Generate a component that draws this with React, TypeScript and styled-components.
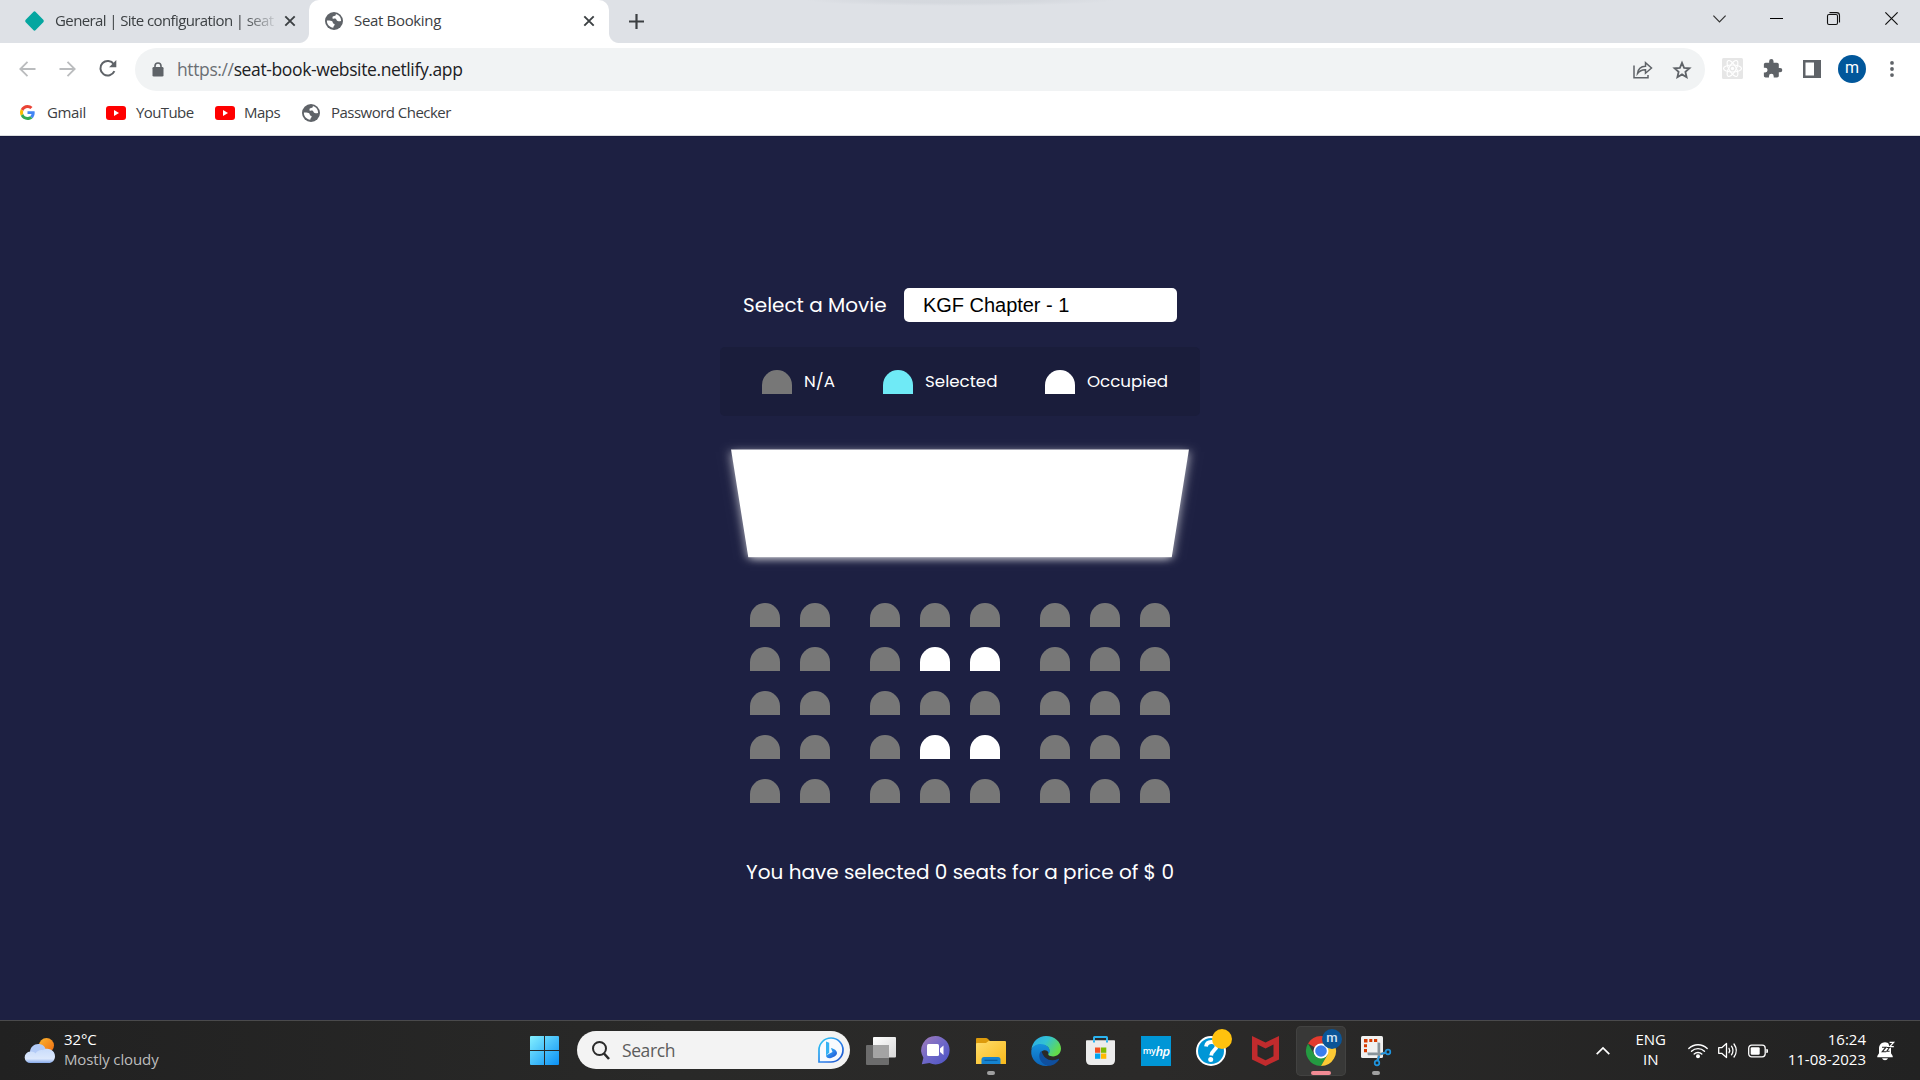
import React from "react";
import styled, { createGlobalStyle } from "styled-components";

const ui = `"Segoe UI", "Open Sans", "Noto Sans", sans-serif`;
const site = `"Poppins", Inter, "Noto Sans", sans-serif`;

const Global = createGlobalStyle`
  * { box-sizing: border-box; }
  body { margin: 0; overflow: hidden; background: #1d2042; }
`;

const Desktop = styled.div`
  display: flex;
  flex-direction: column;
  width: 1920px;
  height: 1080px;
  font-family: ${ui};
  white-space: nowrap;
  svg { display: block; flex: none; overflow: visible; }
`;

/* ---------- browser chrome ---------- */
const TabStrip = styled.div`
  display: flex;
  align-items: flex-start;
  height: 43px;
  flex: none;
  background:
    radial-gradient(ellipse 155px 6px at 960px 0, rgba(120, 128, 140, 0.09) 50%, transparent) no-repeat,
    #dee1e6;
`;

const Tab = styled.div<{ $active?: boolean }>`
  position: relative;
  display: flex;
  align-items: center;
  height: 43px;
  width: ${(p) => (p.$active ? 300 : 309)}px;
  padding: 0 ${(p) => (p.$active ? 15 : 14)}px 1px ${(p) => (p.$active ? 16 : 25)}px;
  border-radius: 10px 10px 0 0;
  background: ${(p) => (p.$active ? "#fff" : "transparent")};
  ${(p) =>
    p.$active &&
    `&::before, &::after {
      content: "";
      position: absolute;
      bottom: 0;
      width: 10px;
      height: 10px;
    }
    &::before { left: -10px; background: radial-gradient(circle at 0 0, transparent 9.5px, #fff 10.5px); }
    &::after { right: -10px; background: radial-gradient(circle at 100% 0, transparent 9.5px, #fff 10.5px); }`}
`;

const TabTitle = styled.div<{ $spacing: number; $fade?: boolean }>`
  flex: 1;
  min-width: 0;
  margin-left: 11px;
  padding-bottom: 2px;
  overflow: hidden;
  font-size: 15px;
  line-height: 22px;
  color: #3c4043;
  letter-spacing: ${(p) => p.$spacing}px;
  ${(p) => p.$fade && "mask-image: linear-gradient(90deg, #000 188px, transparent 224px);"}
`;

const NewTab = styled.div`
  display: flex;
  align-items: center;
  height: 42px;
  margin-left: 20px;
`;

const WindowControls = styled.div`
  display: flex;
  align-items: center;
  height: 37px;
  margin-left: auto;
`;

const ControlSlot = styled.div<{ $w: number }>`
  display: flex;
  justify-content: center;
  width: ${(p) => p.$w}px;
`;

const Toolbar = styled.div`
  display: flex;
  align-items: center;
  height: 53px;
  flex: none;
  padding: 0 0 2px 19px;
  background: #fff;
`;

const NavButtons = styled.div`
  display: flex;
  align-items: center;
  gap: 23px;
  width: 116px;
`;

const Omnibox = styled.div`
  display: flex;
  align-items: center;
  width: 1570px;
  height: 43px;
  margin-top: 2px;
  padding: 0 14px 0 17px;
  border-radius: 22px;
  background: #f1f3f4;
`;

const Url = styled.div`
  flex: 1;
  margin: 0 0 1px 13px;
  font-size: 17.5px;
  letter-spacing: -0.38px;
  color: #202124;
  span { color: #6b6f74; }
`;

const OmniActions = styled.div`
  display: flex;
  align-items: center;
  gap: 20px;
`;

const ToolbarActions = styled.div`
  display: flex;
  align-items: center;
  margin-left: 17px;
`;

const Avatar = styled.div`
  display: flex;
  align-items: center;
  justify-content: center;
  width: 28px;
  height: 28px;
  margin: 0 24px 0 17px;
  padding-bottom: 1px;
  border-radius: 50%;
  background: #01579b;
  color: #fff;
  font: 16px/1 Roboto, sans-serif;
`;

const Bookmarks = styled.div`
  display: flex;
  align-items: center;
  height: 40px;
  flex: none;
  padding: 0 0 6px 20px;
  background: #fff;
  border-bottom: 1px solid #dcdee0;
`;

const Bookmark = styled.div<{ $w: number; $gap: number; $spacing: number }>`
  display: flex;
  align-items: center;
  gap: ${(p) => p.$gap}px;
  width: ${(p) => p.$w}px;
  font-size: 15px;
  line-height: 22px;
  letter-spacing: ${(p) => p.$spacing}px;
  color: #3c4043;
  span { padding-bottom: 2px; }
`;

/* ---------- booking page ---------- */
const Page = styled.main`
  display: flex;
  flex-direction: column;
  align-items: center;
  flex: 1;
  padding-top: 151px;
  background: #1d2042;
  border-top: 1px solid #171a3c;
  color: #fff;
  font-family: ${site};
`;

const MovieRow = styled.div`
  display: flex;
  align-items: center;
  justify-content: space-between;
  width: 434px;
  height: 34px;
  font-size: 20px;
`;

const MovieSelect = styled.div`
  display: flex;
  align-items: center;
  width: 273px;
  height: 34px;
  padding: 0 19px;
  border-radius: 5px;
  background: #fff;
  color: #000;
  font-family: "Liberation Sans", Arial, sans-serif;
  font-size: 20px;
  letter-spacing: -0.03px;
`;

const Legend = styled.ul`
  display: flex;
  width: 480px;
  height: 69px;
  margin: 25px 0 33px;
  padding: 23px 0 0 42px;
  border-radius: 5px;
  background: #1a1d3b;
  list-style: none;
`;

const LegendItem = styled.li<{ $w: number }>`
  display: flex;
  align-items: flex-start;
  gap: 12px;
  width: ${(p) => p.$w}px;
  font-size: 16.7px;
  line-height: 23px;
`;

const seatColor = { na: "#777777", selected: "#6feaf6", occupied: "#ffffff" };

const Seat = styled.div<{ $kind: keyof typeof seatColor }>`
  width: 30px;
  height: 24px;
  border-radius: 15px 15px 0 0;
  background: ${(p) => seatColor[p.$kind]};
`;

const Screen = styled.div`
  flex: none;
  width: 440px;
  height: 133px;
  margin: -10px 0 31px;
  background: #fff;
  transform: perspective(1000px) rotateX(-36deg);
  box-shadow: 0 3px 10px rgba(255, 255, 255, 0.75);
`;

const SeatGrid = styled.div`
  display: grid;
  grid-template-columns: 50px 70px 50px 50px 70px 50px 50px 30px;
  row-gap: 20px;
  margin-bottom: 55px;
`;

const Summary = styled.p`
  margin: 0;
  font-size: 20px;
  line-height: 28px;
`;

/* ---------- taskbar ---------- */
const Taskbar = styled.footer`
  display: flex;
  align-items: center;
  height: 60px;
  flex: none;
  border-top: 1px solid #4a4a4c;
  background: linear-gradient(90deg, #212121, #292928 35%, #2b2a29 60%, #222 100%);
  color: #fff;
`;

const Weather = styled.div`
  display: flex;
  align-items: center;
  gap: 9px;
  width: 519px;
  padding-left: 25px;
`;

const TwoLines = styled.div<{ $align?: string; $w?: number; $spacing?: number }>`
  width: ${(p) => (p.$w ? p.$w + "px" : "auto")};
  padding-bottom: 3px;
  font-size: 15px;
  line-height: 20px;
  letter-spacing: ${(p) => p.$spacing ?? 0}px;
  text-align: ${(p) => p.$align ?? "left"};
`;

const Muted = styled.div`
  color: #bdbdbd;
`;

const Slot = styled.div<{ $active?: boolean }>`
  position: relative;
  display: flex;
  align-items: center;
  justify-content: center;
  width: 50px;
  height: 50px;
  margin-right: 5px;
  flex: none;
  border-radius: 5px;
  ${(p) => p.$active && "background: #383837; box-shadow: inset 0 0 0 1px #424241;"}
`;

const Running = styled.span<{ $active?: boolean }>`
  position: absolute;
  bottom: 1px;
  left: 50%;
  width: ${(p) => (p.$active ? 20 : 8)}px;
  height: 4px;
  border-radius: 2px;
  transform: translateX(-50%);
  background: ${(p) => (p.$active ? "#f28b94" : "#a0a0a0")};
`;

const Badge = styled.span<{ $color: string }>`
  position: absolute;
  top: 3px;
  right: 4px;
  width: 20px;
  height: 20px;
  border-radius: 50%;
  background: ${(p) => p.$color};
  color: #d3e4f4;
  font: 500 13px/18px Roboto, sans-serif;
  text-align: center;
`;

const SearchBox = styled.div`
  display: flex;
  align-items: center;
  width: 273px;
  height: 38px;
  margin: 0 6px 1px 3px;
  padding: 0 6px 0 15px;
  flex: none;
  border-radius: 19px;
  background: #f3f3f3;
  color: #5c5c5c;
  font-size: 17.5px;
  letter-spacing: -0.4px;
  span { flex: 1; margin-left: 12px; }
`;

const HpTile = styled.div`
  display: flex;
  align-items: center;
  justify-content: center;
  width: 30px;
  height: 30px;
  background: #0096d6;
  font: 600 9px/30px "Open Sans", sans-serif;
  letter-spacing: -0.3px;
  i { font-size: 13px; letter-spacing: -0.8px; }
`;

const Tray = styled.div`
  display: flex;
  align-items: center;
  height: 100%;
  margin-left: auto;
  padding-right: 25px;
`;

const TrayIcons = styled.div`
  display: flex;
  align-items: center;
  gap: 10px;
  margin: 0 20px 0 12px;
`;

const Language = styled(TwoLines)`
  margin-left: 16px;
`;

const Clock = styled(TwoLines)`
  margin-right: 11px;
`;

const Globe = () => (
  <svg width="18" height="18" viewBox="0 0 18 18">
    <circle cx="9" cy="9" r="9" fill="#5f6368" />
    <path d="M1.9 8.6C3.6 8.4 6.4 8.6 7.4 9.6c.9 1-.2 1.9 1.4 2.1 1.2.2 1 1.1.5 1.7-.5.7-1 1.2-1 2.4-3.5-.3-6.6-3.300-6.400-7.200z" fill="#fff" />
    <path d="M10.900 2c0 1.300-.4 1.900-1.700 2-1.400.1-1.800.7-1.700 1.900.1 1.300 1.400.8 2.600.7 1.200 0 1.100 1.300 2 2.200.9.8 2.500.3 4 .2.100-3.500-2-6.200-5.200-7z" fill="#fff" />
  </svg>
);

const Cross = ({ size = 10, w = 1.9, color = "#3c4043" }) => (
  <svg width={size} height={size} viewBox="0 0 10 10" stroke={color} strokeWidth={(w * 10) / size}>
    <path d="M.3.3l9.400 9.400M9.700.3L.3 9.700" />
  </svg>
);

const Arrow = ({ flip = false }) => (
  <svg width="17" height="16" viewBox="0 0 17 16" fill="none" stroke="#babcbe" strokeWidth="1.8" transform={flip ? "scale(-1 1)" : undefined}>
    <path d="M16.500 8H1.500M8.500.8L1.300 8l7.200 7.200" />
  </svg>
);

const YouTube = () => (
  <svg width="20" height="14" viewBox="0 0 20 14">
    <rect width="20" height="14" rx="3" fill="#f00" />
    <path d="M8 4l5 3-5 3z" fill="#fff" />
  </svg>
);

const GoogleG = () => (
  <svg width="15" height="15" viewBox="0 0 48 48">
    <path fill="#EA4335" d="M24 9.500c3.540 0 6.710 1.220 9.210 3.600l6.850-6.850C35.900 2.380 30.470 0 24 0 14.620 0 6.510 5.380 2.560 13.220l7.980 6.190C12.430 13.720 17.740 9.500 24 9.500z" />
    <path fill="#4285F4" d="M46.980 24.550c0-1.570-.15-3.090-.38-4.550H24v9.020h12.940c-.58 2.960-2.260 5.480-4.780 7.180l7.730 6c4.510-4.180 7.090-10.360 7.090-17.650z" />
    <path fill="#FBBC05" d="M10.530 28.590c-.48-1.450-.76-2.990-.76-4.590s.27-3.140.76-4.590l-7.980-6.190C.92 16.460 0 20.120 0 24c0 3.880.92 7.540 2.560 10.780l7.970-6.190z" />
    <path fill="#34A853" d="M24 48c6.480 0 11.930-2.130 15.890-5.810l-7.730-6c-2.150 1.450-4.920 2.300-8.160 2.300-6.260 0-11.570-4.220-13.470-9.910l-7.980 6.190C6.510 42.620 14.620 48 24 48z" />
  </svg>
);

const ReactExt = () => (
  <svg width="21" height="21" viewBox="0 0 21 21">
    <rect width="21" height="21" rx="1.500" fill="#e6e6e6" />
    <g fill="none" stroke="#fff" strokeWidth="1.200">
      <ellipse cx="10.500" cy="10.500" rx="9" ry="3.500" />
      <ellipse cx="10.500" cy="10.500" rx="9" ry="3.500" transform="rotate(60 10.500 10.500)" />
      <ellipse cx="10.500" cy="10.500" rx="9" ry="3.500" transform="rotate(120 10.500 10.500)" />
    </g>
    <circle cx="10.500" cy="10.500" r="1.700" fill="#fff" />
  </svg>
);

const BingIcon = () => (
  <svg width="26" height="26" viewBox="0 0 26 26">
    <defs>
      <linearGradient id="bing" x1="0" y1="0" x2="1" y2="1">
        <stop offset="0" stopColor="#2ccdf5" />
        <stop offset=".6" stopColor="#2a7be8" />
        <stop offset="1" stopColor="#1b4fc4" />
      </linearGradient>
    </defs>
    <path d="M1 25V13A12 12 0 1 1 13 25z" fill="#f7fafe" stroke="url(#bing)" strokeWidth="1.700" />
    <path d="M8 4.500l3.200 1.200v10l-3.200 2.800z" fill="#35b2f3" />
    <path d="M8 18.500l3.200-1.800 3.300-1.800-1.600-4c3 .7 6.100 2.200 6.100 5.200 0 2.800-4.300 4.800-6.900 5.100-2.500.2-4.100-1.100-4.100-2.700z" fill="url(#bing)" />
  </svg>
);

const StartIcon = () => (
  <svg width="29" height="29" viewBox="0 0 29 29">
    <defs>
      <linearGradient id="win" x1="0" y1="0" x2="29" y2="29" gradientUnits="userSpaceOnUse">
        <stop stopColor="#84f0ff" />
        <stop offset="1" stopColor="#0a90f5" />
      </linearGradient>
    </defs>
    <path fill="url(#win)" d="M0 1q0-1 1-1h13v14H0zM15 0h13q1 0 1 1v13H15zM0 15h14v14H1q-1 0-1-1zM15 15h14v13q0 1-1 1H15z" />
  </svg>
);

const TaskViewIcon = () => (
  <svg width="30" height="28" viewBox="0 0 30 28">
    <defs>
      <linearGradient id="tv" x1="0" y1="0" x2="1" y2="1">
        <stop stopColor="#fff" />
        <stop offset="1" stopColor="#d8d8d8" />
      </linearGradient>
    </defs>
    <rect x="0" y="8" width="23" height="20" rx="1" fill="#6c6c6c" />
    <rect x="7" y="0" width="23" height="20.500" rx="1" fill="url(#tv)" />
    <rect x="7" y="8" width="16" height="12.500" fill="#a4a4a4" />
  </svg>
);

const ChatIcon = () => (
  <svg width="30" height="29" viewBox="0 0 30 29">
    <defs>
      <linearGradient id="chat" x1="0" y1="0" x2="1" y2="1">
        <stop stopColor="#a37bb8" />
        <stop offset=".5" stopColor="#6f68c8" />
        <stop offset="1" stopColor="#4b52c4" />
      </linearGradient>
    </defs>
    <path d="M14.500 0a14.200 14.200 0 1 1-6 27.100L.8 28.200l1.600-6.500A14.200 14.200 0 0 1 14.500 0z" fill="url(#chat)" />
    <rect x="6" y="8" width="12" height="12" rx="1.500" fill="#fff" />
    <path d="M19 12.500l3.500-3v9.500l-3.500-3z" fill="#fff" />
  </svg>
);

const FolderIcon = () => (
  <svg width="30" height="28" viewBox="0 0 30 28">
    <defs>
      <linearGradient id="fold" x1="0" y1="0" x2="1" y2="1">
        <stop stopColor="#ffdd6b" />
        <stop offset="1" stopColor="#f9b91a" />
      </linearGradient>
    </defs>
    <path d="M0 2q0-1 1-1h9q1 0 2 1l2 2v6H0z" fill="#dd9b0c" />
    <path d="M0 7q0-1 1-1h9l2.500-2H29q1 0 1 1v22H0z" fill="url(#fold)" />
    <path d="M5.500 27v-4.500q0-2.500 2.500-2.500h14q2.500 0 2.500 2.500V27z" fill="#1583d0" />
    <rect x="8.500" y="22.700" width="13" height="1.300" fill="#0b5c9c" />
  </svg>
);

const EdgeIcon = () => (
  <svg width="30" height="30" viewBox="0 0 30 30">
    <defs>
      <linearGradient id="e1" x1="0" y1="0" x2="1" y2=".5">
        <stop stopColor="#2aa8e8" />
        <stop offset=".5" stopColor="#33c2d4" />
        <stop offset="1" stopColor="#63db4a" />
      </linearGradient>
      <linearGradient id="e2" x1="0" y1="0" x2="0" y2="1">
        <stop stopColor="#1793dd" />
        <stop offset="1" stopColor="#0b63b8" />
      </linearGradient>
    </defs>
    <path d="M.4 13.500C1.200 5.800 7.400 0 15 0c9 0 15 6.300 15 12.600 0 5-3.800 7.900-7.900 7.900-4 0-5.300-1.700-4.600-2.900 1.800-3 1-7.600-4.500-8.300C7 8.500 2 10 .4 13.500z" fill="url(#e1)" />
    <path d="M.3 14.500C1.200 10.500 5 8 9.500 8c5 0 9.300 3 9.300 7.300 0 1-.4 2-1 2.700-.2-2.500-2.400-4.200-4.800-3.700-3.500.8-4.500 4.300-3.500 7.500 1.200 4 4.500 7 8.500 8C8 31.500-.8 24 .3 14.500z" fill="url(#e2)" />
    <path d="M10.500 14.800c-4.300 3.200-2.500 13 6.500 15 5 .3 8.700-2.700 10.900-6 .5-.9-.1-1.300-.8-.9-7.400 3.600-14.800.2-16.600-8.100z" fill="#0f4f9e" />
  </svg>
);

const StoreIcon = () => (
  <svg width="30" height="29" viewBox="0 0 30 29">
    <path d="M8 7V1.500Q8 1 8.500 1h12q.500 0 .5.500V7" fill="none" stroke="#2bb4f0" strokeWidth="2" />
    <path d="M0 5q0-.8.800-.8h27.400q.800 0 .8.800v19q0 5-5 5H5q-5 0-5-5z" fill="#ececec" />
    <path d="M8 4.200v2.300M21 4.200v2.300" stroke="#2bb4f0" strokeWidth="2" />
    <path d="M9 11.500h5.300v5.300H9z" fill="#f25022" />
    <path d="M15 11.500h5.300v5.300H15z" fill="#7fba00" />
    <path d="M9 17.500h5.300v5.300H9z" fill="#00a4ef" />
    <path d="M15 17.500h5.300v5.300H15z" fill="#ffb900" />
  </svg>
);

const HelpIcon = () => (
  <svg width="30" height="30" viewBox="0 0 30 30">
    <circle cx="15" cy="15" r="14" fill="#0096d6" stroke="#fff" strokeWidth="2" />
    <path d="M10 10.500c.5-3.500 3-4.700 6-4.500 3.200.3 4.800 2.200 4.600 4.500-.3 3.600-5 4-5.400 9" fill="none" stroke="#fff" strokeWidth="3.800" />
    <circle cx="14.700" cy="23.500" r="2.500" fill="#fff" />
  </svg>
);

const McAfeeIcon = () => (
  <svg width="28" height="30" viewBox="0 0 28 30">
    <path d="M0 0l13.500 6.500L27 0v23.500L13.500 30 0 23.500zM5.500 8.500v11.700l8 4 8-4V8.500l-8 4z" fill="#c12b2d" fillRule="evenodd" />
  </svg>
);

const ChromeIcon = () => (
  <svg width="30" height="30" viewBox="0 0 30 30">
    <path d="M15 15L2 7.500A15 15 0 0 1 28 7.500H15z" fill="#e33b2e" />
    <path d="M2 7.500A15 15 0 0 0 15 30l6.500-11.250L8.500 18.750z" fill="#249a41" />
    <path d="M28 7.500A15 15 0 0 1 15 30l6.500-11.250L15 7.500z" fill="#fcc934" />
    <circle cx="15" cy="15" r="7.500" fill="#fff" />
    <circle cx="15" cy="15" r="5.800" fill="#3b7ded" />
  </svg>
);

const SnipIcon = () => (
  <svg width="30" height="30" viewBox="0 0 30 30">
    <rect width="22" height="22" rx="1.500" fill="#f1f1f1" />
    <path d="M3 3h3.500v3.500H3zM8.300 3h3v3h-3zM13 3h3.200v3H13zM3 8.300h3v3H3zM3 13h3v3.200H3z" fill="#d83b01" />
    <path d="M17.500 6v11.500M6 17.500h11" stroke="#c3c7ca" strokeWidth="2.500" />
    <path d="M18 7v12l-1.500 5.500M7 18h13l4.500-1.300" fill="none" stroke="#8a959c" strokeWidth="2.400" />
    <circle cx="27" cy="16" r="2.300" fill="none" stroke="#1f95e0" strokeWidth="1.700" />
    <circle cx="16" cy="27" r="2.300" fill="none" stroke="#1f95e0" strokeWidth="1.700" />
    <path d="M24.800 16.500L20 18M16.800 25l1.400-5" stroke="#1f95e0" strokeWidth="1.700" />
  </svg>
);

const CloudIcon = () => (
  <svg width="30" height="26" viewBox="0 0 30 26">
    <defs>
      <linearGradient id="sun" x1="0" y1="0" x2="1" y2="1">
        <stop stopColor="#fdb62f" />
        <stop offset="1" stopColor="#ee6a10" />
      </linearGradient>
      <linearGradient id="cl" x1="0" y1="0" x2="0" y2="1">
        <stop stopColor="#c9dcfb" />
        <stop offset=".7" stopColor="#dce8fc" />
        <stop offset="1" stopColor="#86a9ea" />
      </linearGradient>
    </defs>
    <circle cx="21.500" cy="7.500" r="7.500" fill="url(#sun)" />
    <path d="M5 14c.2-5 4-8 8.300-8 4 0 6.500 2.200 7.500 5.500l2 6H5z" fill="#b3cbf7" />
    <path d="M5.500 25a5.700 5.700 0 0 1-.3-11.400c2-.3 4 .5 5.300 1.800C12 13 15 11.500 18 12.200c2-1.700 5-2 7.500-.7C28.500 12.800 30 15.500 30 18.200c0 4-3 6.800-6.300 6.800z" fill="url(#cl)" />
  </svg>
);

const WifiIcon = () => (
  <svg width="20" height="16" viewBox="0 0 20 16" fill="none" stroke="#fff" strokeWidth="1.400" strokeLinecap="round">
    <path d="M.8 5.500a13 13 0 0 1 18.400 0M3.500 8.300a9.200 9.200 0 0 1 13 0M6.200 11a5.400 5.400 0 0 1 7.600 0" />
    <circle cx="10" cy="13.200" r="1.300" fill="#fff" />
  </svg>
);

const SoundIcon = () => (
  <svg width="20" height="17" viewBox="0 0 20 17" fill="none" stroke="#fff" strokeWidth="1.300" strokeLinecap="round" strokeLinejoin="round">
    <path d="M.7 5.700h3L8.500 1.500v14L3.700 11.300h-3z" />
    <path d="M11 6.300q1.400 2.200 0 4.400M13.500 4.200q3 4.300 0 8.600M16 2q4.600 6.500 0 13" />
  </svg>
);

const BatteryIcon = () => (
  <svg width="20" height="14" viewBox="0 0 20 14">
    <rect x=".7" y="1.200" width="16.500" height="11.600" rx="3" fill="none" stroke="#fff" strokeWidth="1.300" />
    <rect x="2.700" y="3.200" width="9" height="7.600" rx="1.200" fill="#fff" />
    <path d="M18.300 5h.5q1.200 0 1.200 1v2q0 1-1.200 1h-.5z" fill="#fff" />
  </svg>
);

const BellIcon = () => (
  <svg width="18" height="20" viewBox="0 0 18 20">
    <path d="M8 1.200C4.500 1.200 2 4 2 7.500v4.800L.3 15v1.300h15.400V15L14 12.300V7.500C14 4 11.500 1.200 8 1.200z" fill="#fff" />
    <path d="M5 17.300h6q-.8 2-3 2t-3-2z" fill="#fff" />
    <path d="M10.800 0h7.200v7h-4l-1.500-1z" fill="#262626" />
    <path d="M12.600 1.300h4L12.800 5.700h4" stroke="#fff" fill="none" strokeWidth="1.300" />
    <path d="M5 6.200h4L5.200 10.800h4M9.800 6.500h2.600l-2.600 3.800h2.800" stroke="#262626" fill="none" strokeWidth="1.100" />
  </svg>
);

const occupied = new Set([11, 12, 27, 28]);
const seats = Array.from({ length: 40 }, (_, i) => (occupied.has(i) ? "occupied" : "na") as "occupied" | "na");

const PuzzleSlot = styled.div`
  margin-left: 20px;
`;

const PanelSlot = styled.div`
  margin-left: 22px;
`;

export default function App() {
  return (
    <Desktop>
      <Global />
      <TabStrip>
        <Tab>
          <svg width="19" height="20" viewBox="0 0 19 20">
            <path d="M8.300.9q1.200-1.200 2.400 0l7.600 7.900q1.200 1.200 0 2.400l-7.600 7.900q-1.200 1.200-2.400 0L.7 11.200q-1.200-1.200 0-2.400z" fill="#05a6a0" />
          </svg>
          <TabTitle $spacing={-0.6} $fade>General | Site configuration | seat</TabTitle>
          <Cross />
        </Tab>
        <Tab $active>
          <Globe />
          <TabTitle $spacing={-0.33}>Seat Booking</TabTitle>
          <Cross />
        </Tab>
        <NewTab>
          <svg width="15" height="15" viewBox="0 0 15 15" stroke="#3c4043" strokeWidth="2.200">
            <path d="M7.500 0v15M0 7.500h15" />
          </svg>
        </NewTab>
        <WindowControls>
          <ControlSlot $w={57}>
            <svg width="13" height="8" viewBox="0 0 13 8" fill="none" stroke="#333" strokeWidth="1.200"><path d="M.4.700l6.100 6.100L12.600.7" /></svg>
          </ControlSlot>
          <ControlSlot $w={57}>
            <svg width="13" height="1" viewBox="0 0 13 1"><rect width="13" height="1" fill="#000" /></svg>
          </ControlSlot>
          <ControlSlot $w={57}>
            <svg width="13" height="13" viewBox="0 0 13 13" fill="none" stroke="#111" strokeWidth="1.100">
              <rect x=".5" y="2.500" width="10" height="10" rx="1.500" />
              <path d="M2.500.6H9.500Q12.500.6 12.500 3.500V10.500" />
            </svg>
          </ControlSlot>
          <ControlSlot $w={58}><Cross size={13} w={1.2} color="#111" /></ControlSlot>
        </WindowControls>
      </TabStrip>

      <Toolbar>
        <NavButtons>
          <Arrow />
          <Arrow flip />
          <svg width="18" height="17" viewBox="0 0 18 17">
            <path d="M14.800 4.200A7.300 7.300 0 1 0 15.400 11.200" fill="none" stroke="#5f6368" strokeWidth="2" />
            <path d="M17.300 0v7.200h-7.200z" fill="#5f6368" />
          </svg>
        </NavButtons>
        <Omnibox>
          <svg width="12" height="15" viewBox="0 0 12 15">
            <rect x=".5" y="5" width="11" height="9.500" rx="1.300" fill="#5f6368" />
            <path d="M3 6V4a3 3 0 0 1 6 0v2" fill="none" stroke="#5f6368" strokeWidth="1.600" />
          </svg>
          <Url><span>https://</span>seat-book-website.netlify.app</Url>
          <OmniActions>
            <svg width="20" height="18" viewBox="0 0 20 18" fill="none" stroke="#5f6368" strokeWidth="1.500">
              <path d="M1 4.500V16.800H15V14" />
              <path d="M4.500 12.500C5 8 8 5.500 12.500 5.300V1.600L18.500 7l-6 5.200V8.700C9 8.600 6.500 9.800 4.500 12.500z" />
            </svg>
            <svg width="18" height="18" viewBox="0 0 18 18" fill="none" stroke="#5f6368" strokeWidth="1.800">
              <path d="M9 1.800l2.100 5 5.400.5-4.100 3.600 1.200 5.300L9 13.400l-4.600 2.800 1.200-5.300L1.500 7.300l5.400-.5z" />
            </svg>
          </OmniActions>
        </Omnibox>
        <ToolbarActions>
          <ReactExt />
          <PuzzleSlot>
            <svg width="18" height="18" viewBox="1 2 20.500 20.500">
              <path d="M20.500 11H19V7c0-1.100-.9-2-2-2h-4V3.500a2.500 2.500 0 0 0-5 0V5H4c-1.100 0-2 .9-2 2v3.800h1.500a2.700 2.700 0 0 1 0 5.400H2V20c0 1.100.9 2 2 2h3.800v-1.500a2.700 2.700 0 0 1 5.400 0V22H17c1.100 0 2-.9 2-2v-4h1.500a2.500 2.500 0 0 0 0-5z" fill="#5f6368" />
            </svg>
          </PuzzleSlot>
          <PanelSlot>
            <svg width="18" height="18" viewBox="0 0 18 18">
              <path d="M0 0h18v18H0zM2.500 2.500v13H11v-13z" fill="#5f6368" fillRule="evenodd" />
            </svg>
          </PanelSlot>
          <Avatar>m</Avatar>
          <svg width="4" height="16" viewBox="0 0 4 16" fill="#5f6368">
            <circle cx="2" cy="1.900" r="1.900" /><circle cx="2" cy="8" r="1.900" /><circle cx="2" cy="14.100" r="1.900" />
          </svg>
        </ToolbarActions>
      </Toolbar>

      <Bookmarks>
        <Bookmark $w={86} $gap={12} $spacing={-0.35}><GoogleG /><span>Gmail</span></Bookmark>
        <Bookmark $w={109} $gap={10} $spacing={-0.6}><YouTube /><span>YouTube</span></Bookmark>
        <Bookmark $w={87} $gap={9} $spacing={-0.5}><YouTube /><span>Maps</span></Bookmark>
        <Bookmark $w={160} $gap={11} $spacing={-0.52}><Globe /><span>Password Checker</span></Bookmark>
      </Bookmarks>

      <Page>
        <MovieRow>
          Select a Movie
          <MovieSelect>KGF Chapter - 1</MovieSelect>
        </MovieRow>
        <Legend>
          <LegendItem $w={121}><Seat $kind="na" />N/A</LegendItem>
          <LegendItem $w={162}><Seat $kind="selected" />Selected</LegendItem>
          <LegendItem $w={140}><Seat $kind="occupied" />Occupied</LegendItem>
        </Legend>
        <Screen />
        <SeatGrid>
          {seats.map((kind, i) => <Seat key={i} $kind={kind} />)}
        </SeatGrid>
        <Summary>You have selected 0 seats for a price of $ 0</Summary>
      </Page>

      <Taskbar>
        <Weather>
          <CloudIcon />
          <TwoLines $spacing={-0.12}>32°C<Muted>Mostly cloudy</Muted></TwoLines>
        </Weather>
        <Slot><StartIcon /></Slot>
        <SearchBox>
          <svg width="18" height="19" viewBox="0 0 18 19" fill="none" stroke="#2a2a2a" strokeWidth="2">
            <circle cx="7.500" cy="7.500" r="6.500" />
            <path d="M12 12.500l5 5.500" strokeWidth="2.600" />
          </svg>
          <span>Search</span>
          <BingIcon />
        </SearchBox>
        <Slot><TaskViewIcon /></Slot>
        <Slot><ChatIcon /></Slot>
        <Slot><FolderIcon /><Running /></Slot>
        <Slot><EdgeIcon /></Slot>
        <Slot><StoreIcon /></Slot>
        <Slot><HpTile>my<i>hp</i></HpTile></Slot>
        <Slot><HelpIcon /><Badge $color="#ffc20e" /></Slot>
        <Slot><McAfeeIcon /></Slot>
        <Slot $active><ChromeIcon /><Badge $color="#0b5597">m</Badge><Running $active /></Slot>
        <Slot><SnipIcon /><Running /></Slot>
        <Tray>
          <svg width="14" height="8" viewBox="0 0 14 8" fill="none" stroke="#fff" strokeWidth="1.700"><path d="M.7 7.200L7 1l6.300 6.200" /></svg>
          <Language $align="center" $w={50}>ENG<div>IN</div></Language>
          <TrayIcons>
            <WifiIcon />
            <SoundIcon />
            <BatteryIcon />
          </TrayIcons>
          <Clock $align="right">16:24<div>11-08-2023</div></Clock>
          <BellIcon />
        </Tray>
      </Taskbar>
    </Desktop>
  );
}
